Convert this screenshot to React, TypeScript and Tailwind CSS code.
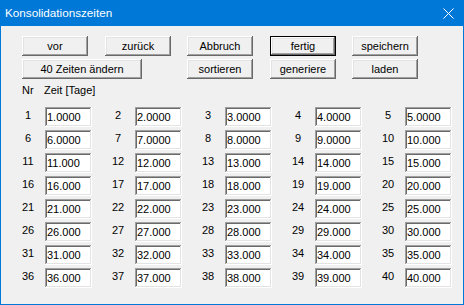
import React from 'react';

type BtnProps = {
  label: string;
  className?: string;
  isDefault?: boolean;
};

// classic win32 raised bevel
const bevel =
  'shadow-[inset_-1px_-1px_#696969,inset_1px_1px_#ffffff,inset_-2px_-2px_#a0a0a0,inset_2px_2px_#e3e3e3]';

const Button = ({ label, className = 'w-[66px]', isDefault }: BtnProps) => {
  if (isDefault)
    return (
      <div className={`${className} h-[20px] border border-black`}>
        <div className={`flex h-full items-center justify-center bg-[#f0f0f0] ${bevel}`}>
          {label}
        </div>
      </div>
    );
  return (
    <div className={`${className} flex h-[20px] items-center justify-center bg-[#f0f0f0] ${bevel}`}>
      {label}
    </div>
  );
};

const values = Array.from({ length: 40 }, (_, i) => {
  const n = i + 1;
  return { nr: n, zeit: n < 10 ? n.toFixed(4) : n.toFixed(3) };
});

const Field = ({ nr, zeit }: { nr: number; zeit: string }) => (
  <div className="flex w-[90px] items-start">
    <div className="w-[20px] pt-[2px] text-center leading-[13px]">{nr}</div>
    <div className="ml-[7px] h-[20px] w-[47px] bg-white pl-[2px] leading-[20px] shadow-[inset_-1px_-1px_#ffffff,inset_1px_1px_#a0a0a0,inset_-2px_-2px_#e3e3e3,inset_2px_2px_#696969]">
      {zeit}
    </div>
  </div>
);

export default function App() {
  return (
    <div className="flex h-[305px] w-[464px] flex-col font-['Liberation_Sans',Arial,sans-serif] text-[11px] text-black">
      <div className="flex h-[26px] shrink-0 items-center justify-between bg-[#0078d7] pl-[5px] text-white">
        <span className="text-[11.7px] leading-[14px]">Konsolidationszeiten</span>
        <svg width="11" height="11" viewBox="0 0 11 11" className="mr-[10px]">
          <path d="M0.5 0.5 L10.5 10.5 M10.5 0.5 L0.5 10.5" stroke="#ffffff" strokeWidth="1" />
        </svg>
      </div>
      <div className="flex-1 border border-t-0 border-[#0078d7] bg-[#f0f0f0] pt-[10px] pl-[17px]">
        <div className="flex pl-[4px]">
          <Button label="vor" />
          <Button label="zurück" className="ml-[17px] w-[66px]" />
          <Button label="Abbruch" className="ml-[16px] w-[66px]" />
          <Button label="fertig" className="ml-[17px] w-[66px]" isDefault />
          <Button label="speichern" className="ml-[16px] w-[66px]" />
        </div>
        <div className="mt-[3px] flex pl-[4px]">
          <Button label="40 Zeiten ändern" className="w-[120px]" />
          <Button label="sortieren" className="ml-[45px] w-[66px]" />
          <Button label="generiere" className="ml-[17px] w-[66px]" />
          <Button label="laden" className="ml-[16px] w-[66px]" />
        </div>
        <div className="mt-[5px] flex pl-[4px] leading-[13px]">
          <span className="w-[22px]">Nr</span>
          <span>Zeit [Tage]</span>
        </div>
        <div className="mt-[10px] grid grid-cols-[repeat(5,90px)] gap-y-[3px]">
          {values.map((v) => (
            <Field key={v.nr} nr={v.nr} zeit={v.zeit} />
          ))}
        </div>
      </div>
    </div>
  );
}
